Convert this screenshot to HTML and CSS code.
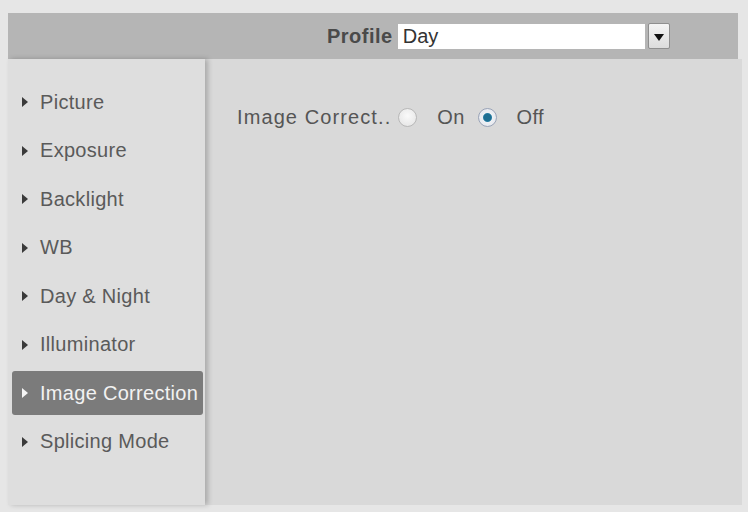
FILE: index.html
```html
<!DOCTYPE html>
<html>
<head>
<meta charset="utf-8">
<link rel="stylesheet" href="styles.css">
</head>
<body>
<div class="frame">
  <div class="topbar">
    <span class="profile-label">Profile</span>
    <div class="select">
      <span class="select-value">Day</span>
    </div>
    <div class="select-btn"><span class="arrow"></span></div>
  </div>
  <div class="main">
    <ul class="menu">
      <li class="item"><span class="tri"></span>Picture</li>
      <li class="item"><span class="tri"></span>Exposure</li>
      <li class="item"><span class="tri"></span>Backlight</li>
      <li class="item"><span class="tri"></span>WB</li>
      <li class="item"><span class="tri"></span>Day &amp; Night</li>
      <li class="item"><span class="tri"></span>Illuminator</li>
      <li class="item active"><span class="tri"></span>Image Correction</li>
      <li class="item"><span class="tri"></span>Splicing Mode</li>
    </ul>
    <div class="content">
      <div class="row">
        <span class="label">Image Correct..</span>
        <span class="radio"></span>
        <span class="opt">On</span>
        <span class="radio checked"></span>
        <span class="opt">Off</span>
      </div>
    </div>
  </div>
</div>
</body>
</html>
```
FILE: styles.css
```css
* { box-sizing: border-box; }
html, body { margin: 0; padding: 0; }
body {
  width: 748px;
  height: 512px;
  background: #e6e6e6;
  font-family: "Liberation Sans", Arial, sans-serif;
  overflow: hidden;
}
.frame {
  padding: 13px 8px 0 8px;
  height: 505px;
  display: flex;
  flex-direction: column;
}
.topbar {
  height: 46px;
  width: 730px;
  background: #b5b5b5;
  display: flex;
  align-items: center;
  padding-left: 319px;
}
.profile-label {
  font-weight: bold;
  font-size: 20px;
  color: #4a4a4a;
  letter-spacing: 0.5px;
  margin-right: 5px;
}
.select {
  width: 247px;
  height: 25px;
  background: #fff;
  display: flex;
  align-items: center;
  padding-left: 5px;
}
.select-value {
  font-size: 20px;
  color: #333;
}
.select-btn {
  width: 22px;
  height: 26px;
  margin-left: 3px;
  background: linear-gradient(#f4f4f4, #dcdcdc);
  border: 1px solid #8f8f8f;
  border-radius: 2px;
  display: flex;
  align-items: center;
  justify-content: center;
}
.arrow {
  width: 0; height: 0;
  border-left: 5px solid transparent;
  border-right: 5px solid transparent;
  border-top: 7px solid #111;
  margin-top: 2px;
}
.main {
  flex: 1;
  display: flex;
  background: #d9d9d9;
  width: 734px;
}
.menu {
  list-style: none;
  margin: 0;
  padding: 21px 2px 0 4px;
  width: 197px;
  background: #dedede;
  box-shadow: 3px 0 5px rgba(0,0,0,0.22);
  display: flex;
  flex-direction: column;
  gap: 4.5px;
  position: relative;
  z-index: 1;
}
.item {
  height: 44px;
  display: flex;
  align-items: center;
  padding-left: 10px;
  font-size: 20px;
  color: #5a5a5a;
  letter-spacing: 0.3px;
  border-radius: 3px;
  white-space: nowrap;
}
.tri {
  width: 0; height: 0;
  border-top: 5px solid transparent;
  border-bottom: 5px solid transparent;
  border-left: 6px solid #3a3a3a;
  margin-right: 12px;
}
.item.active {
  background: #7b7b7b;
  color: #f2f2f2;
}
.item.active .tri { border-left-color: #f5f5f5; }
.content {
  flex: 1;
  padding: 46px 0 0 32px;
}
.row {
  display: flex;
  align-items: center;
  height: 24px;
  font-size: 20px;
  color: #555;
  letter-spacing: 0.3px;
}
.label { margin-right: 7px; letter-spacing: 1.1px; }
.radio {
  width: 19px;
  height: 19px;
  border-radius: 50%;
  border: 1.5px solid #b8b8b8;
  background: radial-gradient(circle at 50% 40%, #fafafa, #e2e2e2);
}
.radio.checked {
  border-color: #9aa4b8;
  background: radial-gradient(circle, #1e6f92 0 3.5px, #2a7fa4 4px, #eef0f4 5px, #e0e3ea);
}
.opt { margin: 0 13px 0 20px; }
```
